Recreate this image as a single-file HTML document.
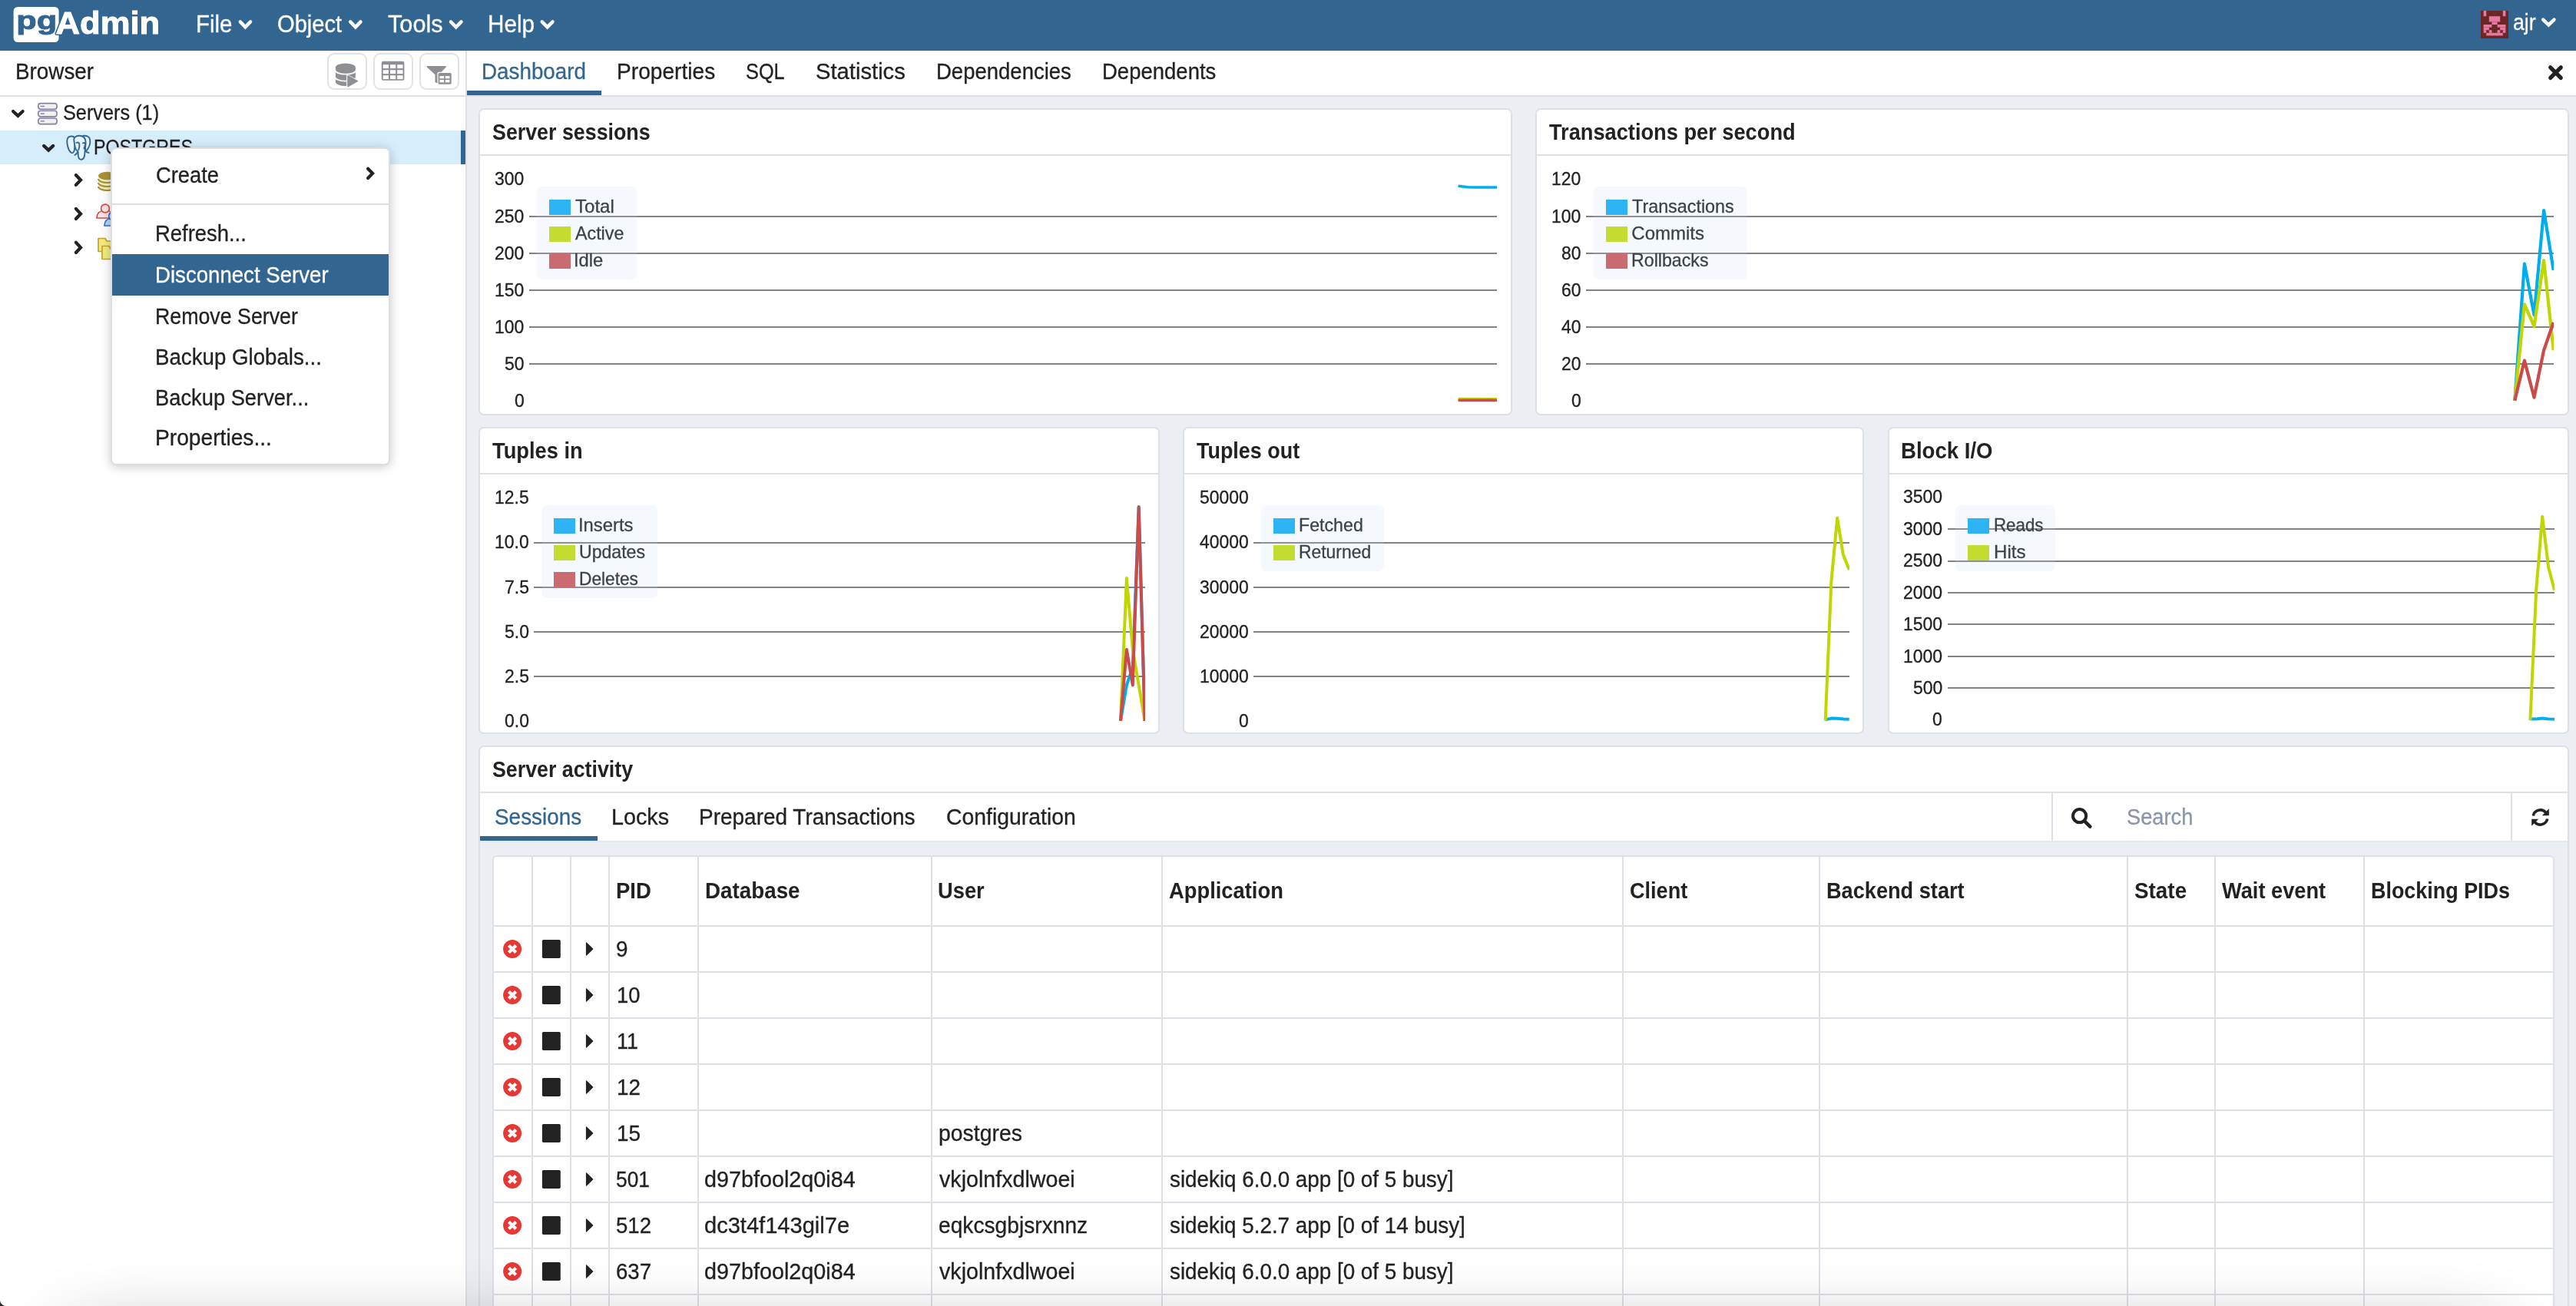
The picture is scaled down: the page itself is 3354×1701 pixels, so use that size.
<!DOCTYPE html>
<html lang="en"><head><meta charset="utf-8"><title>pgAdmin 4</title><style>
html,body{margin:0;padding:0}
body{width:3354px;height:1701px;overflow:hidden;position:relative;background:#fff;font-family:"Liberation Sans",sans-serif;color:#222222}
#root{position:absolute;left:0;top:0;width:3354px;height:1701px;overflow:hidden;will-change:transform}
#root div,#root svg,#root span{position:absolute}
#root div{box-sizing:border-box}
.t{white-space:pre;transform-origin:0 0;display:block;-webkit-text-stroke:0.3px}
svg{overflow:visible}
</style></head>
<body><div id="root">
<div style="left:0.00px;top:0.00px;width:3354.00px;height:66.00px;background:#326690;"></div>
<svg style="left:0.00px;top:0.00px;" width="3354.00" height="66.00" viewBox="0 0 3354 66"><rect x="17.6" y="9" width="59" height="46" rx="5.5" fill="#fff"/><text x="21.3" y="37.6" font-family="Liberation Sans" font-weight="700" font-size="34" textLength="53" stroke="#326690" stroke-width="0.9" lengthAdjust="spacingAndGlyphs" fill="#326690">pg</text><text x="72.6" y="44.4" font-family="Liberation Sans" font-weight="700" font-size="40.5" textLength="135.5" lengthAdjust="spacingAndGlyphs" fill="#fff" stroke="#326690" stroke-width="4" paint-order="stroke" stroke-linejoin="round">Admin</text><text x="72.6" y="44.4" font-family="Liberation Sans" font-weight="700" font-size="40.5" textLength="135.5" lengthAdjust="spacingAndGlyphs" fill="#fff" stroke="#fff" stroke-width="1">Admin</text><polyline points="312.76,28.36 319.40,35.29 326.04,28.36" fill="none" stroke="#fff" stroke-width="4.4" stroke-linecap="round" stroke-linejoin="miter"/><polyline points="456.16,28.36 462.85,35.29 469.54,28.36" fill="none" stroke="#fff" stroke-width="4.4" stroke-linecap="round" stroke-linejoin="miter"/><polyline points="586.96,28.36 593.75,35.29 600.54,28.36" fill="none" stroke="#fff" stroke-width="4.4" stroke-linecap="round" stroke-linejoin="miter"/><polyline points="705.76,28.36 712.65,35.29 719.54,28.36" fill="none" stroke="#fff" stroke-width="4.4" stroke-linecap="round" stroke-linejoin="miter"/><polyline points="3311.16,25.56 3318.35,32.39 3325.54,25.56" fill="none" stroke="#fff" stroke-width="4.4" stroke-linecap="round" stroke-linejoin="miter"/><rect x="3230" y="14" width="36" height="36" fill="#6b2728"/><rect x="3233.60" y="14.00" width="3.60" height="7.20" fill="#e679a0"/><rect x="3258.80" y="14.00" width="3.60" height="7.20" fill="#e679a0"/><rect x="3240.80" y="21.20" width="14.40" height="7.20" fill="#e679a0"/><rect x="3244.40" y="28.40" width="7.20" height="3.60" fill="#e679a0"/><rect x="3233.60" y="32.00" width="10.80" height="3.60" fill="#e679a0"/><rect x="3251.60" y="32.00" width="10.80" height="3.60" fill="#e679a0"/><rect x="3233.60" y="35.60" width="7.20" height="3.60" fill="#e679a0"/><rect x="3255.20" y="35.60" width="7.20" height="3.60" fill="#e679a0"/><rect x="3233.60" y="39.20" width="3.60" height="3.60" fill="#e679a0"/><rect x="3240.80" y="39.20" width="3.60" height="3.60" fill="#e679a0"/><rect x="3251.60" y="39.20" width="3.60" height="3.60" fill="#e679a0"/><rect x="3258.80" y="39.20" width="3.60" height="3.60" fill="#e679a0"/><rect x="3237.20" y="42.80" width="21.60" height="3.60" fill="#e679a0"/></svg>
<span class="t" style="left:255.30px;top:16.46px;font-size:31px;line-height:31px;color:#fff;transform:scaleX(0.9505);">File</span>
<span class="t" style="left:360.76px;top:16.46px;font-size:31px;line-height:31px;color:#fff;transform:scaleX(0.9395);">Object</span>
<span class="t" style="left:504.80px;top:16.46px;font-size:31px;line-height:31px;color:#fff;transform:scaleX(0.9907);">Tools</span>
<span class="t" style="left:634.98px;top:16.46px;font-size:31px;line-height:31px;color:#fff;transform:scaleX(0.9584);">Help</span>
<span class="t" style="left:3272.08px;top:15.25px;font-size:29px;line-height:29px;color:#fff;transform:scaleX(0.9186);">ajr</span>
<span class="t" style="left:19.58px;top:78.85px;font-size:29px;line-height:29px;transform:scaleX(0.9599);">Browser</span>
<div style="left:0.00px;top:124.30px;width:606.00px;height:1.70px;background:#dde0e6;"></div>
<div style="left:426.00px;top:69.00px;width:52.00px;height:48.00px;background:#fff;border:2px solid #e0e3e9;border-radius:9px;"></div>
<div style="left:486.00px;top:69.00px;width:52.00px;height:48.00px;background:#fff;border:2px solid #e0e3e9;border-radius:9px;"></div>
<div style="left:546.00px;top:69.00px;width:52.00px;height:48.00px;background:#fff;border:2px solid #e0e3e9;border-radius:9px;"></div>
<svg style="left:0.00px;top:66.00px;" width="606.00" height="60.00" viewBox="0 66 606 60"><path d="M436.9 88 a13 5.6 0 0 1 26 0 v18.5 a13 5.6 0 0 1 -26 0 z" fill="#8e8f92"/><path d="M436.2 91.3 a13.6 5.3 0 0 0 27.6 0" fill="none" stroke="#fff" stroke-width="1.8"/><path d="M436.2 100.2 a13.6 5.3 0 0 0 27.6 0" fill="none" stroke="#fff" stroke-width="1.8"/><path d="M451.2 96.3 L468.3 105.800 L451.200 115 z" fill="#fff"/><path d="M453 99 L465.4 105.6 L453 112.6 z" fill="#8e8f92" stroke="#8e8f92" stroke-width="1.5" stroke-linejoin="round"/><rect x="496.8" y="79.7" width="29.6" height="25.1" rx="2.2" fill="#8e8f92"/><rect x="498.70" y="84.20" width="7.3" height="4.9" fill="#fff"/><rect x="507.95" y="84.20" width="7.3" height="4.9" fill="#fff"/><rect x="517.20" y="84.20" width="7.3" height="4.9" fill="#fff"/><rect x="498.70" y="91.20" width="7.3" height="4.9" fill="#fff"/><rect x="507.95" y="91.20" width="7.3" height="4.9" fill="#fff"/><rect x="517.20" y="91.20" width="7.3" height="4.9" fill="#fff"/><rect x="498.70" y="98.20" width="7.3" height="4.9" fill="#fff"/><rect x="507.95" y="98.20" width="7.3" height="4.9" fill="#fff"/><rect x="517.20" y="98.20" width="7.3" height="4.9" fill="#fff"/><path d="M556.3 86 h23.9 a0.8 0.8 0 0 1 .6 1.3 l-9.3 10 v12.4 l-5 -2.6 v-9.8 l-10.8 -10 a0.8 0.8 0 0 1 .6 -1.3 z" fill="#8e8f92"/><rect x="569.4" y="93.8" width="19.4" height="17" rx="2" fill="#fff"/><rect x="570.6" y="94.9" width="17.1" height="14.8" rx="1.6" fill="#8e8f92"/><rect x="572.50" y="99.00" width="5.6" height="3.3" fill="#fff"/><rect x="579.80" y="99.00" width="5.6" height="3.3" fill="#fff"/><rect x="572.50" y="104.00" width="5.6" height="3.3" fill="#fff"/><rect x="579.80" y="104.00" width="5.6" height="3.3" fill="#fff"/></svg>
<div style="left:0.00px;top:170.00px;width:606.00px;height:44.00px;background:#d6edfb;"></div>
<div style="left:600.00px;top:170.00px;width:6.00px;height:44.00px;background:#326690;"></div>
<span class="t" style="left:81.86px;top:134.44px;font-size:27px;line-height:27px;transform:scaleX(0.9367);">Servers (1)</span>
<span class="t" style="left:121.58px;top:178.84px;font-size:27px;line-height:27px;transform:scaleX(0.8604);">POSTGRES</span>
<svg style="left:0.00px;top:126.00px;" width="606.00" height="300.00" viewBox="0 126 606 300"><polyline points="17.08,144.98 23.35,150.83 29.62,144.98" fill="none" stroke="#222222" stroke-width="4.2" stroke-linecap="round" stroke-linejoin="miter"/><polyline points="57.08,189.88 63.15,195.53 69.22,189.88" fill="none" stroke="#222222" stroke-width="4.2" stroke-linecap="round" stroke-linejoin="miter"/><polyline points="98.88,227.98 105.03,234.45 98.88,240.92" fill="none" stroke="#222222" stroke-width="4.2" stroke-linecap="round" stroke-linejoin="miter"/><polyline points="98.88,271.88 105.03,278.45 98.88,285.02" fill="none" stroke="#222222" stroke-width="4.2" stroke-linecap="round" stroke-linejoin="miter"/><polyline points="98.88,315.78 105.03,322.40 98.88,329.02" fill="none" stroke="#222222" stroke-width="4.2" stroke-linecap="round" stroke-linejoin="miter"/><rect x="49.8" y="134.6" width="24.3" height="7.6" rx="3.2" fill="#f0f0f0" stroke="#8580a4" stroke-width="1.6"/><rect x="52.7" y="137.7" width="5.2" height="1.4" fill="#8580a4"/><rect x="49.8" y="144.3" width="24.3" height="7.6" rx="3.2" fill="#f0f0f0" stroke="#8580a4" stroke-width="1.6"/><rect x="52.7" y="147.4" width="5.2" height="1.4" fill="#8580a4"/><rect x="49.8" y="154" width="24.3" height="7.6" rx="3.2" fill="#f0f0f0" stroke="#8580a4" stroke-width="1.6"/><rect x="52.7" y="157.1" width="5.2" height="1.4" fill="#8580a4"/><g fill="#e4f3fc" stroke="#336791" stroke-width="1.9" stroke-linejoin="round" stroke-linecap="round"><path d="M93 177.5 c-5 0 -6.3 4 -5.6 9 c.7 5 2.6 10.6 5.3 12.3 c1.8 1 3.2 -.6 4 -2.4 l1.5 -14 c-.5 -3 -2.4 -4.9 -5.200 -4.900 z"/><path d="M108 177 c4.500 -.8 8.600 1 9.200 5 c.6 4.600 -1.600 10.500 -4.300 13.800 c-1 1 -1.600 .2 -1.700 -1 l-.8 -11 c-.3 -3.400 -1 -5.600 -2.400 -6.800 z"/><path d="M96.500 184 c-1.200 -4.800 2 -7.300 6.500 -7.300 c5 0 8.300 3 8.600 8.300 c.2 3.800 -.6 7 -.9 10.300 c-.3 4 -.2 7.300 -1.400 10 c-1 2.300 -3.600 3 -5.500 1.900 c-2 -1.200 -2.100 -4 -2.100 -6.900 c0 -2.300 -.3 -3.600 -1.500 -4.300 c-2.600 -1.500 -3 -6.800 -3.700 -12 z"/><path d="M99.500 186 c1.500 -1 3.300 -.6 3.800 1.300 c.4 2 -.2 5.500 -1 8" fill="none"/><path d="M108 186.500 c1.500 -1 3 -.3 3 1.500 c0 2 -1.500 3.500 -1.500 5.500" fill="none"/><path d="M101.500 197.500 c-1 2 -2.500 3.500 -4 4.300" fill="none"/><path d="M111 196.500 c1.500 1.500 3 2.200 4.500 2.500" fill="none"/></g><g><path d="M128 229 a11.500 5 0 0 1 23 0 v13.500 a11.500 5 0 0 1 -23 0 z" fill="#f0eec0"/><ellipse cx="139.500" cy="229" rx="11.500" ry="5.200" fill="#a99136"/><path d="M128 233 a11.500 5 0 0 0 23 0" fill="none" stroke="#a99136" stroke-width="2"/><path d="M128 238 a11.500 5 0 0 0 23 0" fill="none" stroke="#a99136" stroke-width="2"/><path d="M128 243 a11.500 5 0 0 0 23 0" fill="none" stroke="#a99136" stroke-width="2.200"/></g><g stroke-width="1.600"><path d="M126 284 c0 -7 5 -10 11 -10 s11 3 11 10 z" fill="#fbe3e4" stroke="#cf4a4f"/><circle cx="137" cy="271.500" r="5.400" fill="#fbe3e4" stroke="#cf4a4f"/><path d="M136 294 c0 -7 5 -10 11 -10 s11 3 11 10 z" fill="#b5d6ee" stroke="#2a6fdb"/><circle cx="147" cy="281.500" r="5.400" fill="#b5d6ee" stroke="#2a6fdb"/></g><g stroke="#c9a227" stroke-width="1.700" fill="#f0ec7c" stroke-linejoin="round"><path d="M128 310.500 h9 l2 3.500 h9 v13.500 h-20 z"/><path d="M133 320.500 h9 l2 3.500 h9 v13.500 h-20 z"/></g></svg>
<div style="left:606.00px;top:66.00px;width:2.00px;height:1635.00px;background:#dde0e6;"></div>
<div style="left:608.00px;top:124.30px;width:2746.00px;height:1.70px;background:#dde0e6;"></div>
<div style="left:608.00px;top:118.20px;width:175.30px;height:5.90px;background:#326690;"></div>
<span class="t" style="left:627.08px;top:79.05px;font-size:29px;line-height:29px;color:#326690;transform:scaleX(0.9586);">Dashboard</span>
<span class="t" style="left:802.76px;top:79.05px;font-size:29px;line-height:29px;transform:scaleX(0.9701);">Properties</span>
<span class="t" style="left:971.43px;top:79.05px;font-size:29px;line-height:29px;transform:scaleX(0.8735);">SQL</span>
<span class="t" style="left:1062.29px;top:79.05px;font-size:29px;line-height:29px;transform:scaleX(1.0067);">Statistics</span>
<span class="t" style="left:1218.60px;top:79.05px;font-size:29px;line-height:29px;transform:scaleX(0.9485);">Dependencies</span>
<span class="t" style="left:1434.80px;top:79.05px;font-size:29px;line-height:29px;transform:scaleX(0.9487);">Dependents</span>
<svg style="left:3316.00px;top:83.00px;" width="24.00" height="24.00" viewBox="0 0 24 24"><path d="M4.7 4.800 L18.300 18.400 M18.300 4.800 L4.700 18.400" stroke="#222222" stroke-width="5.200" stroke-linecap="round"/></svg>
<div style="left:608.00px;top:126.00px;width:2746.00px;height:1575.00px;background:#ebeef3;"></div>
<div style="left:623.00px;top:141.00px;width:1346.00px;height:400.00px;background:#fff;border:2px solid #dde0e6;border-radius:7px;"></div>
<div style="left:623.00px;top:201.00px;width:1346.00px;height:2.00px;background:#dde0e6;"></div>
<span class="t" style="left:641.40px;top:158.35px;font-size:29px;line-height:29px;font-weight:700;-webkit-text-stroke:0;transform:scaleX(0.9243);">Server sessions</span>
<div style="left:689.00px;top:281.00px;width:1260.00px;height:2.00px;background:#828282;"></div>
<div style="left:689.00px;top:329.00px;width:1260.00px;height:2.00px;background:#828282;"></div>
<div style="left:689.00px;top:377.00px;width:1260.00px;height:2.00px;background:#828282;"></div>
<div style="left:689.00px;top:425.00px;width:1260.00px;height:2.00px;background:#828282;"></div>
<div style="left:689.00px;top:473.00px;width:1260.00px;height:2.00px;background:#828282;"></div>
<div style="left:699.00px;top:243.00px;width:129.60px;height:121.00px;background:rgba(195,212,240,0.17);border-radius:7px;"></div>
<div style="left:715.00px;top:260.00px;width:28.00px;height:20.00px;background:#2db4f4;"></div>
<span class="t" style="left:749.30px;top:257.18px;font-size:24px;line-height:24px;color:#3d4248;transform:scaleX(1.0028);">Total</span>
<div style="left:715.00px;top:295.05px;width:28.00px;height:20.00px;background:#c4dc32;"></div>
<span class="t" style="left:749.30px;top:292.23px;font-size:24px;line-height:24px;color:#3d4248;transform:scaleX(0.9691);">Active</span>
<div style="left:715.00px;top:330.10px;width:28.00px;height:20.00px;background:#cc6a71;"></div>
<span class="t" style="left:747.32px;top:327.28px;font-size:24px;line-height:24px;color:#3d4248;transform:scaleX(0.9904);">Idle</span>
<span class="t" style="left:644.05px;top:221.48px;font-size:24px;line-height:24px;transform:scaleX(0.9560);">300</span>
<span class="t" style="left:644.05px;top:269.58px;font-size:24px;line-height:24px;transform:scaleX(0.9560);">250</span>
<span class="t" style="left:644.05px;top:317.68px;font-size:24px;line-height:24px;transform:scaleX(0.9560);">200</span>
<span class="t" style="left:644.05px;top:365.68px;font-size:24px;line-height:24px;transform:scaleX(0.9560);">150</span>
<span class="t" style="left:644.05px;top:413.68px;font-size:24px;line-height:24px;transform:scaleX(0.9560);">100</span>
<span class="t" style="left:656.81px;top:461.68px;font-size:24px;line-height:24px;transform:scaleX(0.9560);">50</span>
<span class="t" style="left:669.57px;top:509.68px;font-size:24px;line-height:24px;transform:scaleX(0.9560);">0</span>
<svg style="left:0.00px;top:0.00px;pointer-events:none;" width="3354.00" height="1701.00" viewBox="0 0 3354 1701"><defs><clipPath id="cp689"><rect x="689" y="191.89999999999998" width="1260.3" height="331.2"/></clipPath></defs><g clip-path="url(#cp689)" fill="none" stroke-width="3.6" stroke-linejoin="round" stroke-linecap="butt"><polyline stroke="#00adef" points="1898.6,242.2 1911.2,243.8 1923.8,244.0 1936.4,244.0 1949.0,244.0"/><polyline stroke="#c0d600" points="1898.6,519.6 1949.0,519.9"/><polyline stroke="#cb4b4b" points="1898.6,521.4 1949.0,521.4"/></g></svg>
<div style="left:1999.00px;top:141.00px;width:1346.00px;height:400.00px;background:#fff;border:2px solid #dde0e6;border-radius:7px;"></div>
<div style="left:1999.00px;top:201.00px;width:1346.00px;height:2.00px;background:#dde0e6;"></div>
<span class="t" style="left:2017.40px;top:158.35px;font-size:29px;line-height:29px;font-weight:700;-webkit-text-stroke:0;transform:scaleX(0.9384);">Transactions per second</span>
<div style="left:2065.00px;top:281.00px;width:1260.00px;height:2.00px;background:#828282;"></div>
<div style="left:2065.00px;top:329.00px;width:1260.00px;height:2.00px;background:#828282;"></div>
<div style="left:2065.00px;top:377.00px;width:1260.00px;height:2.00px;background:#828282;"></div>
<div style="left:2065.00px;top:425.00px;width:1260.00px;height:2.00px;background:#828282;"></div>
<div style="left:2065.00px;top:473.00px;width:1260.00px;height:2.00px;background:#828282;"></div>
<div style="left:2075.00px;top:243.00px;width:199.70px;height:121.00px;background:rgba(195,212,240,0.17);border-radius:7px;"></div>
<div style="left:2091.00px;top:260.00px;width:28.00px;height:20.00px;background:#2db4f4;"></div>
<span class="t" style="left:2125.30px;top:257.18px;font-size:24px;line-height:24px;color:#3d4248;transform:scaleX(0.9722);">Transactions</span>
<div style="left:2091.00px;top:295.05px;width:28.00px;height:20.00px;background:#c4dc32;"></div>
<span class="t" style="left:2124.30px;top:292.23px;font-size:24px;line-height:24px;color:#3d4248;">Commits</span>
<div style="left:2091.00px;top:330.10px;width:28.00px;height:20.00px;background:#cc6a71;"></div>
<span class="t" style="left:2124.33px;top:327.28px;font-size:24px;line-height:24px;color:#3d4248;transform:scaleX(0.9657);">Rollbacks</span>
<span class="t" style="left:2020.05px;top:221.48px;font-size:24px;line-height:24px;transform:scaleX(0.9560);">120</span>
<span class="t" style="left:2020.05px;top:269.58px;font-size:24px;line-height:24px;transform:scaleX(0.9560);">100</span>
<span class="t" style="left:2032.81px;top:317.68px;font-size:24px;line-height:24px;transform:scaleX(0.9560);">80</span>
<span class="t" style="left:2032.81px;top:365.68px;font-size:24px;line-height:24px;transform:scaleX(0.9560);">60</span>
<span class="t" style="left:2032.81px;top:413.68px;font-size:24px;line-height:24px;transform:scaleX(0.9560);">40</span>
<span class="t" style="left:2032.81px;top:461.68px;font-size:24px;line-height:24px;transform:scaleX(0.9560);">20</span>
<span class="t" style="left:2045.57px;top:509.68px;font-size:24px;line-height:24px;transform:scaleX(0.9560);">0</span>
<svg style="left:0.00px;top:0.00px;pointer-events:none;" width="3354.00" height="1701.00" viewBox="0 0 3354 1701"><defs><clipPath id="cp2065"><rect x="2065" y="191.89999999999998" width="1259.9999999999998" height="331.2"/></clipPath></defs><g clip-path="url(#cp2065)" fill="none" stroke-width="4.2" stroke-linejoin="round" stroke-linecap="butt"><polyline stroke="#00adef" points="3274.3,522.0 3286.9,343.6 3299.5,410.0 3312.1,274.0 3324.7,352.0"/><polyline stroke="#c0d600" points="3274.3,522.0 3286.9,396.3 3299.5,425.2 3312.1,339.1 3324.7,456.2"/><polyline stroke="#cb4b4b" points="3274.3,521.4 3286.9,469.6 3299.5,517.7 3312.1,456.2 3324.7,420.0"/></g></svg>
<div style="left:623.00px;top:556.00px;width:887.00px;height:400.00px;background:#fff;border:2px solid #dde0e6;border-radius:7px;"></div>
<div style="left:623.00px;top:616.00px;width:887.00px;height:2.00px;background:#dde0e6;"></div>
<span class="t" style="left:641.40px;top:573.35px;font-size:29px;line-height:29px;font-weight:700;-webkit-text-stroke:0;transform:scaleX(0.9399);">Tuples in</span>
<div style="left:695.00px;top:706.00px;width:796.00px;height:2.00px;background:#828282;"></div>
<div style="left:695.00px;top:764.00px;width:796.00px;height:2.00px;background:#828282;"></div>
<div style="left:695.00px;top:822.00px;width:796.00px;height:2.00px;background:#828282;"></div>
<div style="left:695.00px;top:880.00px;width:796.00px;height:2.00px;background:#828282;"></div>
<div style="left:705.00px;top:658.00px;width:151.30px;height:121.00px;background:rgba(195,212,240,0.17);border-radius:7px;"></div>
<div style="left:721.00px;top:675.00px;width:28.00px;height:20.00px;background:#2db4f4;"></div>
<span class="t" style="left:753.31px;top:672.18px;font-size:24px;line-height:24px;color:#3d4248;transform:scaleX(0.9925);">Inserts</span>
<div style="left:721.00px;top:710.05px;width:28.00px;height:20.00px;background:#c4dc32;"></div>
<span class="t" style="left:754.34px;top:707.23px;font-size:24px;line-height:24px;color:#3d4248;transform:scaleX(0.9616);">Updates</span>
<div style="left:721.00px;top:745.10px;width:28.00px;height:20.00px;background:#cc6a71;"></div>
<span class="t" style="left:754.35px;top:742.28px;font-size:24px;line-height:24px;color:#3d4248;transform:scaleX(0.9456);">Deletes</span>
<span class="t" style="left:643.88px;top:636.38px;font-size:24px;line-height:24px;transform:scaleX(0.9560);">12.5</span>
<span class="t" style="left:643.88px;top:694.44px;font-size:24px;line-height:24px;transform:scaleX(0.9560);">10.0</span>
<span class="t" style="left:656.64px;top:752.50px;font-size:24px;line-height:24px;transform:scaleX(0.9560);">7.5</span>
<span class="t" style="left:656.64px;top:810.56px;font-size:24px;line-height:24px;transform:scaleX(0.9560);">5.0</span>
<span class="t" style="left:656.64px;top:868.62px;font-size:24px;line-height:24px;transform:scaleX(0.9560);">2.5</span>
<span class="t" style="left:656.64px;top:926.68px;font-size:24px;line-height:24px;transform:scaleX(0.9560);">0.0</span>
<svg style="left:0.00px;top:0.00px;pointer-events:none;" width="3354.00" height="1701.00" viewBox="0 0 3354 1701"><defs><clipPath id="cp694"><rect x="694.8" y="608.3" width="796.2" height="331.2"/></clipPath></defs><g clip-path="url(#cp694)" fill="none" stroke-width="4" stroke-linejoin="round" stroke-linecap="butt"><polyline stroke="#00adef" points="1459.0,938.9 1466.9,892.5 1474.8,869.2 1482.7,660.2 1490.6,938.9"/><polyline stroke="#c0d600" points="1459.0,938.9 1466.9,753.1 1474.8,846.0 1482.7,892.5 1490.6,938.9"/><polyline stroke="#cb4b4b" points="1459.0,938.9 1466.9,846.0 1474.8,892.5 1482.7,660.2 1490.6,938.9"/></g></svg>
<div style="left:1540.00px;top:556.00px;width:887.00px;height:400.00px;background:#fff;border:2px solid #dde0e6;border-radius:7px;"></div>
<div style="left:1540.00px;top:616.00px;width:887.00px;height:2.00px;background:#dde0e6;"></div>
<span class="t" style="left:1558.40px;top:573.35px;font-size:29px;line-height:29px;font-weight:700;-webkit-text-stroke:0;transform:scaleX(0.9289);">Tuples out</span>
<div style="left:1632.00px;top:706.00px;width:776.00px;height:2.00px;background:#828282;"></div>
<div style="left:1632.00px;top:764.00px;width:776.00px;height:2.00px;background:#828282;"></div>
<div style="left:1632.00px;top:822.00px;width:776.00px;height:2.00px;background:#828282;"></div>
<div style="left:1632.00px;top:880.00px;width:776.00px;height:2.00px;background:#828282;"></div>
<div style="left:1642.00px;top:658.00px;width:159.80px;height:86.00px;background:rgba(195,212,240,0.17);border-radius:7px;"></div>
<div style="left:1658.00px;top:675.00px;width:28.00px;height:20.00px;background:#2db4f4;"></div>
<span class="t" style="left:1691.33px;top:672.18px;font-size:24px;line-height:24px;color:#3d4248;transform:scaleX(0.9660);">Fetched</span>
<div style="left:1658.00px;top:710.05px;width:28.00px;height:20.00px;background:#c4dc32;"></div>
<span class="t" style="left:1691.35px;top:707.23px;font-size:24px;line-height:24px;color:#3d4248;transform:scaleX(0.9535);">Returned</span>
<span class="t" style="left:1561.53px;top:636.38px;font-size:24px;line-height:24px;transform:scaleX(0.9560);">50000</span>
<span class="t" style="left:1561.53px;top:694.44px;font-size:24px;line-height:24px;transform:scaleX(0.9560);">40000</span>
<span class="t" style="left:1561.53px;top:752.50px;font-size:24px;line-height:24px;transform:scaleX(0.9560);">30000</span>
<span class="t" style="left:1561.53px;top:810.56px;font-size:24px;line-height:24px;transform:scaleX(0.9560);">20000</span>
<span class="t" style="left:1561.53px;top:868.62px;font-size:24px;line-height:24px;transform:scaleX(0.9560);">10000</span>
<span class="t" style="left:1612.57px;top:926.68px;font-size:24px;line-height:24px;transform:scaleX(0.9560);">0</span>
<svg style="left:0.00px;top:0.00px;pointer-events:none;" width="3354.00" height="1701.00" viewBox="0 0 3354 1701"><defs><clipPath id="cp1632"><rect x="1632" y="608.3" width="775.9999999999998" height="331.2"/></clipPath></defs><g clip-path="url(#cp1632)" fill="none" stroke-width="4" stroke-linejoin="round" stroke-linecap="butt"><polyline stroke="#00adef" points="2376.7,937.3 2384.4,935.6 2392.2,935.8 2399.9,936.6 2407.7,936.8"/><polyline stroke="#c0d600" points="2376.7,938.5 2384.4,757.0 2392.2,674.6 2399.9,722.5 2407.7,742.0"/></g></svg>
<div style="left:2458.00px;top:556.00px;width:887.00px;height:400.00px;background:#fff;border:2px solid #dde0e6;border-radius:7px;"></div>
<div style="left:2458.00px;top:616.00px;width:887.00px;height:2.00px;background:#dde0e6;"></div>
<span class="t" style="left:2475.45px;top:573.35px;font-size:29px;line-height:29px;font-weight:700;-webkit-text-stroke:0;transform:scaleX(0.9505);">Block I/O</span>
<div style="left:2536.00px;top:688.00px;width:790.00px;height:2.00px;background:#828282;"></div>
<div style="left:2536.00px;top:730.00px;width:790.00px;height:2.00px;background:#828282;"></div>
<div style="left:2536.00px;top:771.00px;width:790.00px;height:2.00px;background:#828282;"></div>
<div style="left:2536.00px;top:812.00px;width:790.00px;height:2.00px;background:#828282;"></div>
<div style="left:2536.00px;top:854.00px;width:790.00px;height:2.00px;background:#828282;"></div>
<div style="left:2536.00px;top:895.00px;width:790.00px;height:2.00px;background:#828282;"></div>
<div style="left:2546.40px;top:658.00px;width:129.20px;height:86.00px;background:rgba(195,212,240,0.17);border-radius:7px;"></div>
<div style="left:2562.40px;top:675.00px;width:28.00px;height:20.00px;background:#2db4f4;"></div>
<span class="t" style="left:2595.77px;top:672.18px;font-size:24px;line-height:24px;color:#3d4248;transform:scaleX(0.9287);">Reads</span>
<div style="left:2562.40px;top:710.05px;width:28.00px;height:20.00px;background:#c4dc32;"></div>
<span class="t" style="left:2595.70px;top:707.23px;font-size:24px;line-height:24px;color:#3d4248;transform:scaleX(1.0042);">Hits</span>
<span class="t" style="left:2477.99px;top:635.30px;font-size:24px;line-height:24px;transform:scaleX(0.9560);">3500</span>
<span class="t" style="left:2477.99px;top:676.74px;font-size:24px;line-height:24px;transform:scaleX(0.9560);">3000</span>
<span class="t" style="left:2477.99px;top:718.18px;font-size:24px;line-height:24px;transform:scaleX(0.9560);">2500</span>
<span class="t" style="left:2477.99px;top:759.62px;font-size:24px;line-height:24px;transform:scaleX(0.9560);">2000</span>
<span class="t" style="left:2477.99px;top:801.06px;font-size:24px;line-height:24px;transform:scaleX(0.9560);">1500</span>
<span class="t" style="left:2477.99px;top:842.50px;font-size:24px;line-height:24px;transform:scaleX(0.9560);">1000</span>
<span class="t" style="left:2490.75px;top:883.94px;font-size:24px;line-height:24px;transform:scaleX(0.9560);">500</span>
<span class="t" style="left:2516.27px;top:925.38px;font-size:24px;line-height:24px;transform:scaleX(0.9560);">0</span>
<svg style="left:0.00px;top:0.00px;pointer-events:none;" width="3354.00" height="1701.00" viewBox="0 0 3354 1701"><defs><clipPath id="cp2535"><rect x="2535.8" y="607.6" width="790.4999999999998" height="331.2"/></clipPath></defs><g clip-path="url(#cp2535)" fill="none" stroke-width="4" stroke-linejoin="round" stroke-linecap="butt"><polyline stroke="#00adef" points="3294.4,936.6 3302.3,936.4 3310.2,935.6 3318.1,936.6 3326.0,936.8"/><polyline stroke="#c0d600" points="3294.4,938.0 3302.3,767.0 3310.2,673.0 3318.1,738.7 3326.0,768.8"/></g></svg>
<div style="left:623.00px;top:971.00px;width:2722.00px;height:749.00px;background:#fff;border:2px solid #dde0e6;border-radius:7px 7px 0 0;"></div>
<div style="left:623.00px;top:1031.00px;width:2722.00px;height:2.00px;background:#dde0e6;"></div>
<span class="t" style="left:641.40px;top:988.35px;font-size:29px;line-height:29px;font-weight:700;-webkit-text-stroke:0;transform:scaleX(0.9234);">Server activity</span>
<div style="left:625.00px;top:1033.00px;width:2718.00px;height:62.00px;background:#fff;"></div>
<div style="left:625.00px;top:1095.00px;width:2718.00px;height:2.00px;background:#e4e7ec;"></div>
<div style="left:625.00px;top:1097.00px;width:2718.00px;height:640.00px;background:#ebeef3;"></div>
<div style="left:625.00px;top:1089.00px;width:153.00px;height:6.00px;background:#326690;"></div>
<span class="t" style="left:644.04px;top:1050.15px;font-size:29px;line-height:29px;color:#326690;transform:scaleX(0.9624);">Sessions</span>
<span class="t" style="left:796.42px;top:1050.15px;font-size:29px;line-height:29px;transform:scaleX(0.9910);">Locks</span>
<span class="t" style="left:910.47px;top:1050.15px;font-size:29px;line-height:29px;transform:scaleX(0.9648);">Prepared Transactions</span>
<span class="t" style="left:1232.22px;top:1050.15px;font-size:29px;line-height:29px;transform:scaleX(0.9790);">Configuration</span>
<div style="left:2671.00px;top:1033.00px;width:2.00px;height:62.00px;background:#dde0e6;"></div>
<div style="left:3269.00px;top:1033.00px;width:2.00px;height:62.00px;background:#dde0e6;"></div>
<span class="t" style="left:2768.66px;top:1049.75px;font-size:29px;line-height:29px;color:#8b95a9;transform:scaleX(0.9403);">Search</span>
<svg style="left:2694.00px;top:1049.00px;" width="34.00" height="34.00" viewBox="0 0 34 34"><circle cx="13.600" cy="13.700" r="8.600" fill="none" stroke="#222222" stroke-width="4"/><path d="M20 20.300 L27.300 27.600" stroke="#222222" stroke-width="4.600" stroke-linecap="round"/></svg>
<svg style="left:3294.50px;top:1052.00px;" width="25.00" height="25.00" viewBox="0 0 25 25"><g fill="none" stroke="#222222" stroke-width="3.600"><path d="M3.300 10.500 A9.400 9.400 0 0 1 20 6.700"/><path d="M21.700 14.500 A9.400 9.400 0 0 1 5 18.300"/></g><path d="M23.800 1.200 v9 h-9 z" fill="#222222"/><path d="M1.200 23.800 v-9 h9 z" fill="#222222"/></svg>
<div style="left:641.00px;top:1114.00px;width:2685.00px;height:700.00px;background:#fff;border:2px solid #dde0e6;border-radius:6px 6px 0 0;"></div>
<div style="left:692.10px;top:1114.00px;width:1.80px;height:700.00px;background:#dde0e6;"></div>
<div style="left:742.10px;top:1114.00px;width:1.80px;height:700.00px;background:#dde0e6;"></div>
<div style="left:792.10px;top:1114.00px;width:1.80px;height:700.00px;background:#dde0e6;"></div>
<div style="left:907.80px;top:1114.00px;width:1.80px;height:700.00px;background:#dde0e6;"></div>
<div style="left:1212.10px;top:1114.00px;width:1.80px;height:700.00px;background:#dde0e6;"></div>
<div style="left:1512.10px;top:1114.00px;width:1.80px;height:700.00px;background:#dde0e6;"></div>
<div style="left:2111.90px;top:1114.00px;width:1.80px;height:700.00px;background:#dde0e6;"></div>
<div style="left:2368.10px;top:1114.00px;width:1.80px;height:700.00px;background:#dde0e6;"></div>
<div style="left:2768.90px;top:1114.00px;width:1.80px;height:700.00px;background:#dde0e6;"></div>
<div style="left:2883.10px;top:1114.00px;width:1.80px;height:700.00px;background:#dde0e6;"></div>
<div style="left:3076.90px;top:1114.00px;width:1.80px;height:700.00px;background:#dde0e6;"></div>
<div style="left:641.00px;top:1205.10px;width:2685.00px;height:1.80px;background:#dde0e6;"></div>
<div style="left:641.00px;top:1265.10px;width:2685.00px;height:1.80px;background:#dde0e6;"></div>
<div style="left:641.00px;top:1325.10px;width:2685.00px;height:1.80px;background:#dde0e6;"></div>
<div style="left:641.00px;top:1385.10px;width:2685.00px;height:1.80px;background:#dde0e6;"></div>
<div style="left:641.00px;top:1445.10px;width:2685.00px;height:1.80px;background:#dde0e6;"></div>
<div style="left:641.00px;top:1505.10px;width:2685.00px;height:1.80px;background:#dde0e6;"></div>
<div style="left:641.00px;top:1565.10px;width:2685.00px;height:1.80px;background:#dde0e6;"></div>
<div style="left:641.00px;top:1625.10px;width:2685.00px;height:1.80px;background:#dde0e6;"></div>
<div style="left:641.00px;top:1685.10px;width:2685.00px;height:1.80px;background:#dde0e6;"></div>
<span class="t" style="left:801.55px;top:1146.35px;font-size:29px;line-height:29px;font-weight:700;-webkit-text-stroke:0;transform:scaleX(0.9483);">PID</span>
<span class="t" style="left:918.04px;top:1146.35px;font-size:29px;line-height:29px;font-weight:700;-webkit-text-stroke:0;transform:scaleX(0.9583);">Database</span>
<span class="t" style="left:1221.06px;top:1146.35px;font-size:29px;line-height:29px;font-weight:700;-webkit-text-stroke:0;transform:scaleX(0.9415);">User</span>
<span class="t" style="left:1522.40px;top:1146.35px;font-size:29px;line-height:29px;font-weight:700;-webkit-text-stroke:0;transform:scaleX(0.9426);">Application</span>
<span class="t" style="left:2121.87px;top:1146.35px;font-size:29px;line-height:29px;font-weight:700;-webkit-text-stroke:0;transform:scaleX(0.9337);">Client</span>
<span class="t" style="left:2378.06px;top:1146.35px;font-size:29px;line-height:29px;font-weight:700;-webkit-text-stroke:0;transform:scaleX(0.9365);">Backend start</span>
<span class="t" style="left:2779.40px;top:1146.35px;font-size:29px;line-height:29px;font-weight:700;-webkit-text-stroke:0;transform:scaleX(0.9606);">State</span>
<span class="t" style="left:2893.40px;top:1146.35px;font-size:29px;line-height:29px;font-weight:700;-webkit-text-stroke:0;transform:scaleX(0.9390);">Wait event</span>
<span class="t" style="left:3087.07px;top:1146.35px;font-size:29px;line-height:29px;font-weight:700;-webkit-text-stroke:0;transform:scaleX(0.9281);">Blocking PIDs</span>
<span class="t" style="left:802.14px;top:1222.15px;font-size:29px;line-height:29px;transform:scaleX(0.9643);">9</span>
<span class="t" style="left:802.61px;top:1282.15px;font-size:29px;line-height:29px;transform:scaleX(0.9441);">10</span>
<span class="t" style="left:802.65px;top:1342.15px;font-size:29px;line-height:29px;transform:scaleX(0.9267);">11</span>
<span class="t" style="left:802.58px;top:1402.15px;font-size:29px;line-height:29px;transform:scaleX(0.9613);">12</span>
<span class="t" style="left:802.58px;top:1462.15px;font-size:29px;line-height:29px;transform:scaleX(0.9613);">15</span>
<span class="t" style="left:1221.72px;top:1462.15px;font-size:29px;line-height:29px;transform:scaleX(0.9788);">postgres</span>
<span class="t" style="left:802.19px;top:1522.15px;font-size:29px;line-height:29px;transform:scaleX(0.9080);">501</span>
<span class="t" style="left:917.41px;top:1522.15px;font-size:29px;line-height:29px;transform:scaleX(0.9918);">d97bfool2q0i84</span>
<span class="t" style="left:1222.70px;top:1522.15px;font-size:29px;line-height:29px;transform:scaleX(0.9878);">vkjolnfxdlwoei</span>
<span class="t" style="left:1523.20px;top:1522.15px;font-size:29px;line-height:29px;transform:scaleX(0.9586);">sidekiq 6.0.0 app [0 of 5 busy]</span>
<span class="t" style="left:802.15px;top:1582.15px;font-size:29px;line-height:29px;transform:scaleX(0.9512);">512</span>
<span class="t" style="left:917.40px;top:1582.15px;font-size:29px;line-height:29px;transform:scaleX(1.0025);">dc3t4f143gil7e</span>
<span class="t" style="left:1221.73px;top:1582.15px;font-size:29px;line-height:29px;transform:scaleX(0.9714);">eqkcsgbjsrxnnz</span>
<span class="t" style="left:1523.20px;top:1582.15px;font-size:29px;line-height:29px;transform:scaleX(0.9585);">sidekiq 5.2.7 app [0 of 14 busy]</span>
<span class="t" style="left:802.15px;top:1642.15px;font-size:29px;line-height:29px;transform:scaleX(0.9512);">637</span>
<span class="t" style="left:917.41px;top:1642.15px;font-size:29px;line-height:29px;transform:scaleX(0.9918);">d97bfool2q0i84</span>
<span class="t" style="left:1222.70px;top:1642.15px;font-size:29px;line-height:29px;transform:scaleX(0.9878);">vkjolnfxdlwoei</span>
<span class="t" style="left:1523.20px;top:1642.15px;font-size:29px;line-height:29px;transform:scaleX(0.9586);">sidekiq 6.0.0 app [0 of 5 busy]</span>
<svg style="left:0.00px;top:0.00px;pointer-events:none;" width="3354.00" height="1701.00" viewBox="0 0 3354 1701"><circle cx="667.100" cy="1236" r="12" fill="#e53935"/><path d="M662.500 1231.4 l9.200 9.200 m0 -9.200 l-9.200 9.200" stroke="#fff" stroke-width="4.200" stroke-linecap="butt"/><rect x="705.900" y="1224" width="23.900" height="23.900" rx="1.600" fill="#222222"/><path d="M763.500 1227.9 L771.700 1236 L763.500 1244.1 z" fill="#222222" stroke="#222222" stroke-width="1.200" stroke-linejoin="round"/><circle cx="667.100" cy="1296" r="12" fill="#e53935"/><path d="M662.500 1291.4 l9.200 9.200 m0 -9.200 l-9.200 9.200" stroke="#fff" stroke-width="4.200" stroke-linecap="butt"/><rect x="705.900" y="1284" width="23.900" height="23.900" rx="1.600" fill="#222222"/><path d="M763.500 1287.9 L771.700 1296 L763.500 1304.1 z" fill="#222222" stroke="#222222" stroke-width="1.200" stroke-linejoin="round"/><circle cx="667.100" cy="1356" r="12" fill="#e53935"/><path d="M662.500 1351.4 l9.200 9.200 m0 -9.200 l-9.200 9.200" stroke="#fff" stroke-width="4.200" stroke-linecap="butt"/><rect x="705.900" y="1344" width="23.900" height="23.900" rx="1.600" fill="#222222"/><path d="M763.500 1347.9 L771.700 1356 L763.500 1364.1 z" fill="#222222" stroke="#222222" stroke-width="1.200" stroke-linejoin="round"/><circle cx="667.100" cy="1416" r="12" fill="#e53935"/><path d="M662.500 1411.4 l9.200 9.200 m0 -9.200 l-9.200 9.200" stroke="#fff" stroke-width="4.200" stroke-linecap="butt"/><rect x="705.900" y="1404" width="23.900" height="23.900" rx="1.600" fill="#222222"/><path d="M763.500 1407.9 L771.700 1416 L763.500 1424.1 z" fill="#222222" stroke="#222222" stroke-width="1.200" stroke-linejoin="round"/><circle cx="667.100" cy="1476" r="12" fill="#e53935"/><path d="M662.500 1471.4 l9.200 9.200 m0 -9.200 l-9.200 9.200" stroke="#fff" stroke-width="4.200" stroke-linecap="butt"/><rect x="705.900" y="1464" width="23.900" height="23.900" rx="1.600" fill="#222222"/><path d="M763.500 1467.9 L771.700 1476 L763.500 1484.1 z" fill="#222222" stroke="#222222" stroke-width="1.200" stroke-linejoin="round"/><circle cx="667.100" cy="1536" r="12" fill="#e53935"/><path d="M662.500 1531.4 l9.200 9.200 m0 -9.200 l-9.200 9.200" stroke="#fff" stroke-width="4.200" stroke-linecap="butt"/><rect x="705.900" y="1524" width="23.900" height="23.900" rx="1.600" fill="#222222"/><path d="M763.500 1527.9 L771.700 1536 L763.500 1544.1 z" fill="#222222" stroke="#222222" stroke-width="1.200" stroke-linejoin="round"/><circle cx="667.100" cy="1596" r="12" fill="#e53935"/><path d="M662.500 1591.4 l9.200 9.200 m0 -9.200 l-9.200 9.200" stroke="#fff" stroke-width="4.200" stroke-linecap="butt"/><rect x="705.900" y="1584" width="23.900" height="23.900" rx="1.600" fill="#222222"/><path d="M763.500 1587.9 L771.700 1596 L763.500 1604.1 z" fill="#222222" stroke="#222222" stroke-width="1.200" stroke-linejoin="round"/><circle cx="667.100" cy="1656" r="12" fill="#e53935"/><path d="M662.500 1651.4 l9.200 9.200 m0 -9.200 l-9.200 9.200" stroke="#fff" stroke-width="4.200" stroke-linecap="butt"/><rect x="705.900" y="1644" width="23.900" height="23.900" rx="1.600" fill="#222222"/><path d="M763.500 1647.9 L771.700 1656 L763.500 1664.1 z" fill="#222222" stroke="#222222" stroke-width="1.200" stroke-linejoin="round"/></svg>
<div style="left:144.00px;top:192.00px;width:364.00px;height:414.00px;background:#fff;border:2px solid #dddee4;border-radius:7px;box-shadow:0 2px 14px rgba(0,0,0,0.22);"></div>
<div style="left:146.00px;top:265.00px;width:360.00px;height:2.00px;background:#dde0e6;"></div>
<div style="left:146.00px;top:331.00px;width:360.00px;height:53.50px;background:#326690;"></div>
<span class="t" style="left:202.56px;top:213.95px;font-size:29px;line-height:29px;transform:scaleX(0.9421);">Create</span>
<span class="t" style="left:201.61px;top:290.45px;font-size:29px;line-height:29px;transform:scaleX(0.9453);">Refresh...</span>
<span class="t" style="left:201.60px;top:343.95px;font-size:29px;line-height:29px;color:#fff;transform:scaleX(0.9521);">Disconnect Server</span>
<span class="t" style="left:201.66px;top:397.55px;font-size:29px;line-height:29px;transform:scaleX(0.9224);">Remove Server</span>
<span class="t" style="left:201.59px;top:450.55px;font-size:29px;line-height:29px;transform:scaleX(0.9542);">Backup Globals...</span>
<span class="t" style="left:201.62px;top:503.55px;font-size:29px;line-height:29px;transform:scaleX(0.9415);">Backup Server...</span>
<span class="t" style="left:201.56px;top:556.15px;font-size:29px;line-height:29px;transform:scaleX(0.9719);">Properties...</span>
<svg style="left:470.00px;top:210.00px;" width="30.00" height="30.00" viewBox="0 0 30 30"><polyline points="9.08,9.78 15.03,15.85 9.08,21.92" fill="none" stroke="#222222" stroke-width="4.2" stroke-linecap="round" stroke-linejoin="miter"/></svg>
<div style="left:95.00px;top:1750.00px;width:3155.00px;height:100.00px;background:transparent;box-shadow:0 0 100px 0 rgba(0,0,0,.46);pointer-events:none;"></div>
<div style="left:0.00px;top:1693.00px;width:8.00px;height:8.00px;background:radial-gradient(circle at 8px 0px, rgba(0,0,0,0) 7.5px, #2e2e2e 8.5px);pointer-events:none;"></div>
</div></body></html>
